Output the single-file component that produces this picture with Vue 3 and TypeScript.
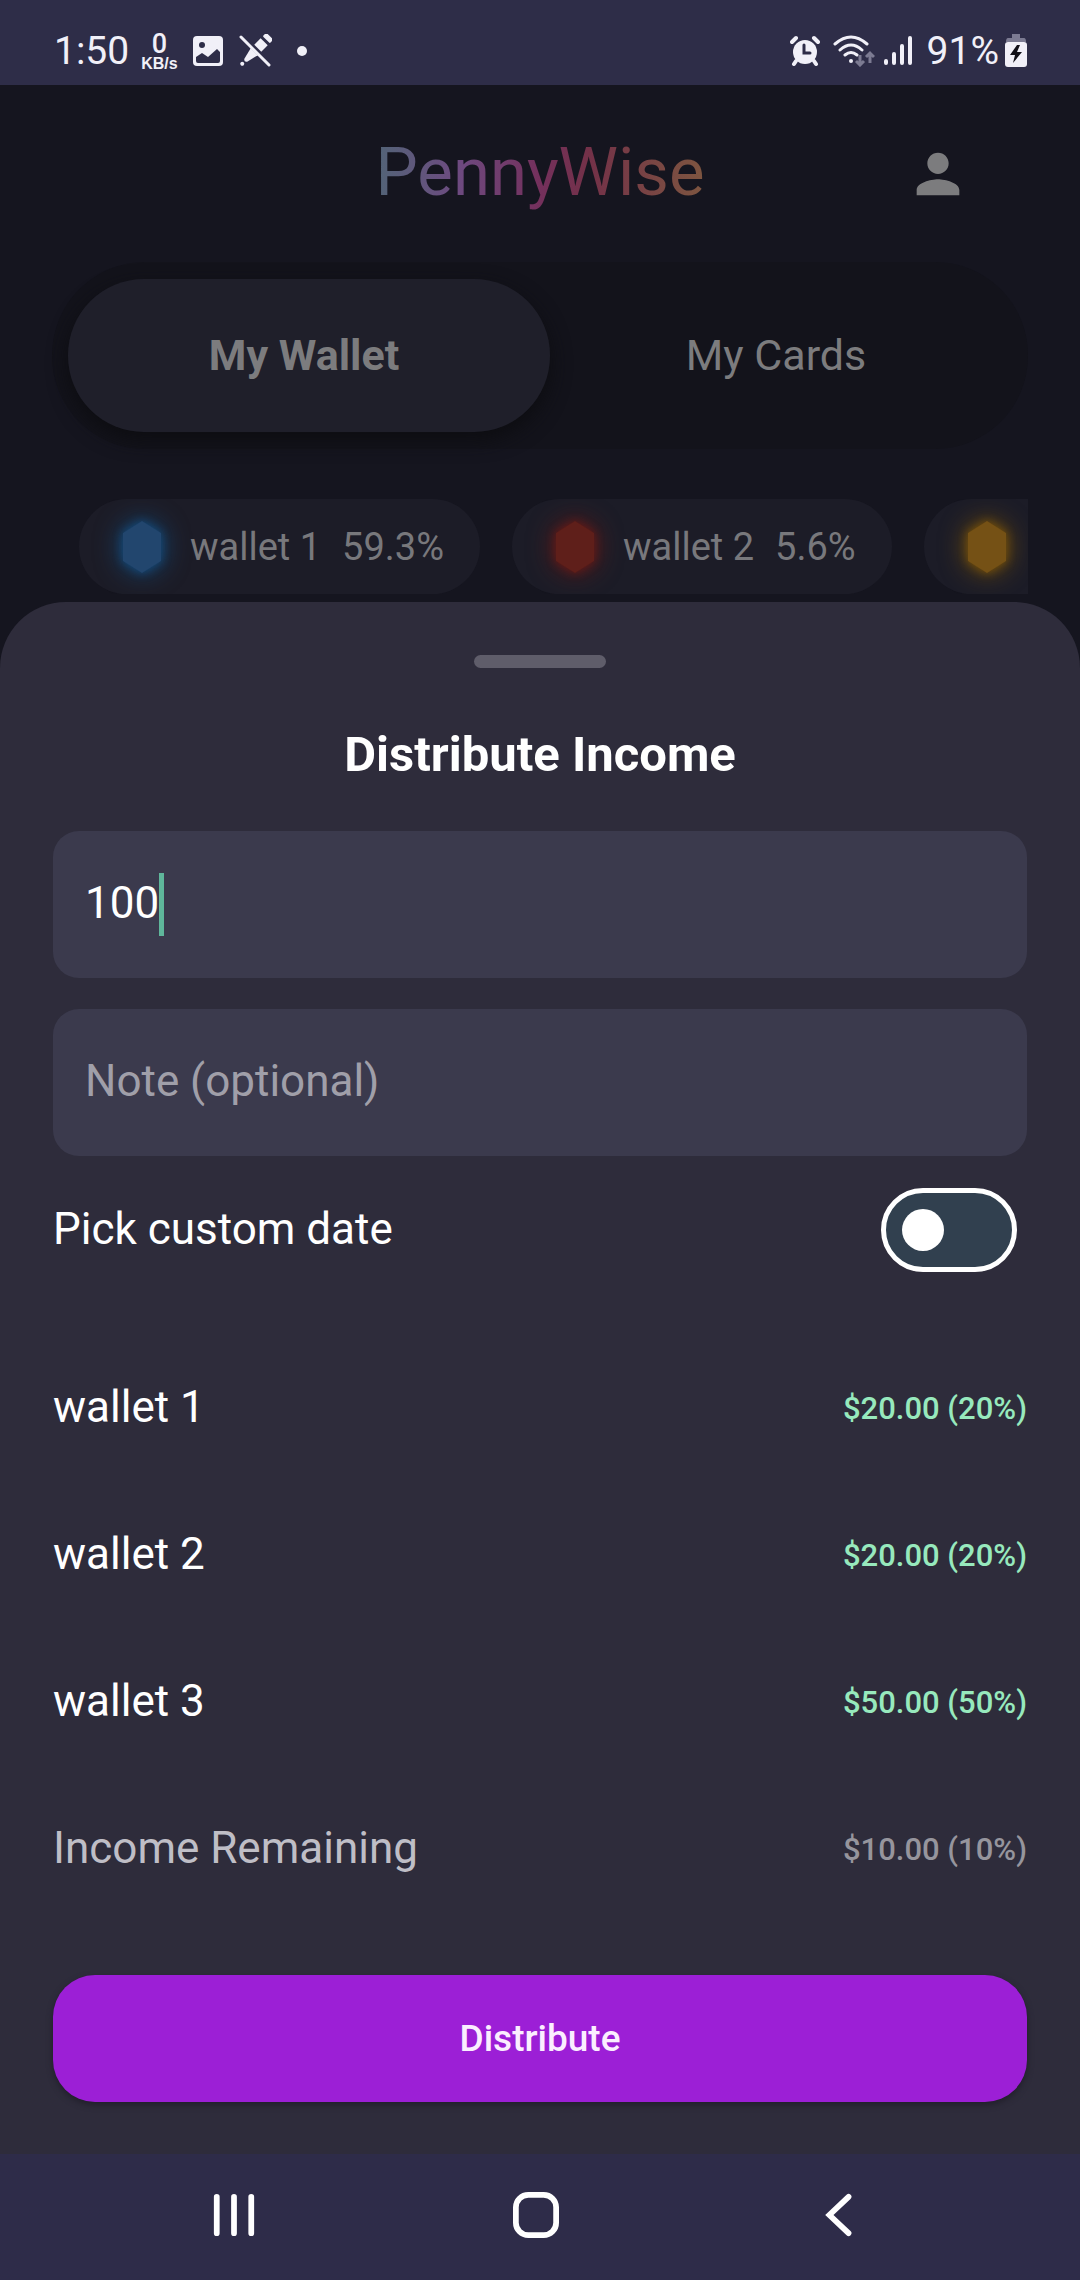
<script setup lang="ts">
import { ref } from 'vue'

interface Chip {
  label: string
  name?: string
  share?: string
  tone: 'blue' | 'red' | 'amber'
}

interface Split {
  name: string
  amount: string
  rest?: boolean
}

const chips: Chip[] = [
  { label: 'wallet 1', name: 'wallet 1', share: '59.3%', tone: 'blue' },
  { label: 'wallet 2', name: 'wallet 2', share: '5.6%', tone: 'red' },
  { label: 'wallet 3', tone: 'amber' },
]

const splits: Split[] = [
  { name: 'wallet 1', amount: '$20.00 (20%)' },
  { name: 'wallet 2', amount: '$20.00 (20%)' },
  { name: 'wallet 3', amount: '$50.00 (50%)' },
  { name: 'Income Remaining', amount: '$10.00 (10%)', rest: true },
]

const amount = ref('100')
const note = ref('')
const customDate = ref(false)
</script>

<template>
  <div class="screen">
    <div class="status">
      <div class="status-side">
        <span class="clock">1:50</span>
        <span class="rate"><b>0</b><small>KB/s</small></span>
        <svg class="picture" viewBox="0 0 30 30" aria-hidden="true">
          <rect width="30" height="30" rx="4" fill="#f1f0f8" />
          <circle cx="9" cy="9" r="3" fill="#2e2d48" />
          <path d="M3 21l6-4 6 4 9-8 3 3v9q0 2-2 2H5q-2 0-2-2z" fill="#2e2d48" />
        </svg>
        <svg class="pen" viewBox="0 0 34 34" fill="#f1f0f8" aria-hidden="true">
          <g transform="translate(29 5) rotate(45)">
            <rect x="-5" y="-4" width="10" height="5" rx="1" />
            <path d="M-5 4h10v14l-3 12q-2 3-4 0l-3-12z" />
            <circle cy="35" r="2" />
          </g>
          <path d="M4 2L32 30" fill="none" stroke="#2e2d48" stroke-width="5" />
          <path d="M3 3L31 31" fill="none" stroke="#f1f0f8" stroke-width="3" stroke-linecap="round" />
        </svg>
        <span class="dot"></span>
      </div>
      <div class="status-side">
        <svg class="alarm" viewBox="0 0 30 30" fill="none" stroke="#f1f0f8" stroke-linecap="round" aria-hidden="true">
          <circle cx="15" cy="16" r="12" fill="#f1f0f8" stroke="none" />
          <path d="M2 6l4-4M24 2l4 4M6 25l-2 3M24 25l2 3" stroke-width="4" />
          <path d="M14 9v8h6" stroke="#2e2d48" stroke-width="3" />
        </svg>
        <svg class="wifi" viewBox="0 0 42 32" fill="none" stroke="#f1f0f8" stroke-width="3" stroke-linecap="round" aria-hidden="true">
          <path d="M2 9Q18-5 34 9M7 15q11-10 22 0M12 20q6-5 12 0" />
          <circle cx="18" cy="26" r="2" fill="#f1f0f8" stroke="none" />
          <path d="M27 20v10m-4-4l4 4 4-4M37 28v-10m-4 4l4-4 4 4" stroke="#7c7b92" stroke-linecap="butt" />
        </svg>
        <svg class="signal" viewBox="0 0 28 30" fill="none" stroke="#f1f0f8" stroke-width="4" stroke-linecap="round" aria-hidden="true">
          <path d="M2 25v2M10 18v9M18 10v17M26 2v25" />
        </svg>
        <span class="clock">91%</span>
        <svg class="battery" viewBox="0 0 22 34" aria-hidden="true">
          <path d="M7 0h8v4h4q2 0 2 4H1q0-4 2-4h4z" fill="#7c7b92" />
          <rect y="8" width="22" height="25" rx="3" fill="#f1f0f8" />
          <path d="M12 11L5 21h5l-2 8 9-11h-5l3-7z" fill="#111018" />
        </svg>
      </div>
    </div>

    <header class="header">
      <h1 class="brand">PennyWise</h1>
      <button class="profile" type="button" aria-label="Profile">
        <svg viewBox="0 0 24 24" fill="#7c7c7e" aria-hidden="true">
          <path d="M12 12c2.21 0 4-1.79 4-4s-1.79-4-4-4-4 1.79-4 4 1.79 4 4 4zm0 2c-2.67 0-8 1.34-8 4v2h16v-2c0-2.66-5.33-4-8-4z" />
        </svg>
      </button>
    </header>

    <nav class="tabs">
      <button class="tab active" type="button">My Wallet</button>
      <button class="tab" type="button">My Cards</button>
    </nav>

    <div class="chips">
      <button v-for="chip in chips" :key="chip.label" class="chip" type="button" :aria-label="chip.label">
        <svg class="gem" :class="chip.tone" viewBox="0 0 38 52" aria-hidden="true">
          <path d="M19 0L38 12v28L19 52 0 40V12z" />
        </svg>
        <span v-if="chip.name">{{ chip.name }}</span>
        <span v-if="chip.share" class="share">{{ chip.share }}</span>
      </button>
    </div>

    <form class="sheet" @submit.prevent>
      <div class="handle"></div>
      <h2 class="title">Distribute Income</h2>
      <label class="field">
        <input
          v-model="amount"
          class="amount-input"
          type="text"
          inputmode="decimal"
          aria-label="Amount"
          :style="{ width: amount.length + 'ch' }"
        />
        <span class="caret"></span>
      </label>
      <label class="field">
        <input v-model="note" class="note-input" type="text" placeholder="Note (optional)" aria-label="Note" />
      </label>
      <label class="date-row">
        <span class="label">Pick custom date</span>
        <input v-model="customDate" class="switch" type="checkbox" role="switch" />
      </label>
      <dl class="splits">
        <div v-for="split in splits" :key="split.name" class="split" :class="{ rest: split.rest }">
          <dt class="label">{{ split.name }}</dt>
          <dd>{{ split.amount }}</dd>
        </div>
      </dl>
      <button class="submit" type="submit">Distribute</button>
    </form>

    <nav class="system">
      <button type="button" aria-label="Recents">
        <svg viewBox="0 0 48 48" fill="none" stroke="#fff" stroke-width="6" stroke-linecap="round" aria-hidden="true">
          <path d="M6 5v38M24 5v38M42 5v38" />
        </svg>
      </button>
      <button type="button" aria-label="Home">
        <svg viewBox="0 0 48 48" fill="none" stroke="#fff" stroke-width="6" aria-hidden="true">
          <rect x="3" y="3" width="42" height="42" rx="13" />
        </svg>
      </button>
      <button type="button" aria-label="Back">
        <svg viewBox="0 0 48 48" fill="none" stroke="#fff" stroke-width="6" stroke-linecap="round" aria-hidden="true">
          <path d="M35 5L15 24l20 19" />
        </svg>
      </button>
    </nav>
  </div>
</template>

<style>
body {
  margin: 0;
  background: #15151f;
}
</style>

<style scoped>
.screen {
  display: flex;
  flex-direction: column;
  min-height: 100vh;
  background: #15151f;
  color: #fff;
  font-family: Roboto, "Liberation Sans", sans-serif;
  font-size: 44px;
}

.screen * {
  box-sizing: border-box;
}

button,
input {
  border: 0;
  padding: 0;
  margin: 0;
  background: none;
  color: inherit;
  font: inherit;
  outline: none;
}

svg {
  display: block;
  flex: none;
}

.status {
  display: flex;
  justify-content: space-between;
  align-items: center;
  height: 85px;
  padding: 16px 53px 0 54px;
  background: #2e2d48;
  color: #f1f0f8;
}

.status-side {
  display: flex;
  align-items: center;
}

.clock {
  font-size: 39px;
  line-height: 40px;
}

.rate {
  display: flex;
  flex-direction: column;
  align-items: center;
  margin: 0 15px 0 12px;
  padding-top: 2px;
}

.rate b {
  font-size: 27px;
  font-weight: 500;
  line-height: 24px;
}

.rate small {
  font-family: "Liberation Sans", sans-serif;
  font-size: 16px;
  font-weight: 700;
  line-height: 16px;
}

.picture {
  width: 30px;
  height: 30px;
}

.pen {
  width: 34px;
  height: 34px;
  margin: 0 25px 0 15px;
}

.dot {
  width: 10px;
  height: 10px;
  border-radius: 5px;
  background: #f1f0f8;
}

.alarm {
  width: 30px;
  height: 32px;
}

.wifi {
  width: 42px;
  height: 32px;
  margin: 0 9px 0 13px;
}

.signal {
  width: 28px;
  height: 30px;
  margin-right: 15px;
}

.battery {
  width: 22px;
  height: 34px;
  margin-left: 6px;
}

.header {
  display: grid;
  grid-template-columns: 1fr auto 1fr;
  align-items: center;
  height: 177px;
  padding: 0 78px;
}

.brand {
  grid-column: 2;
  margin: 0;
  padding-bottom: 3px;
  font-size: 67px;
  font-weight: 400;
  line-height: 80px;
  color: transparent;
  background: linear-gradient(90deg, #526477, #6d4a80 25%, #74305c 50%, #733148 65%, #7d5540);
  background-clip: text;
}

.profile {
  display: grid;
  place-items: center;
  justify-self: end;
  width: 128px;
  height: 128px;
}

.profile svg {
  width: 64px;
  height: 64px;
}

.tabs {
  display: grid;
  grid-template-columns: 1fr 1fr;
  margin: 0 52px;
  padding: 17px 16px;
  border-radius: 93px;
  background: #13131b;
}

.tab {
  height: 153px;
  padding-bottom: 2px;
  border-radius: 76px;
  color: #7c7c7e;
  font-size: 43px;
}

.tab.active {
  margin-right: -10px;
  padding-right: 10px;
  background: #1f1f2a;
  box-shadow: 0 8px 20px #0d0d11;
  font-weight: 700;
}

.chips {
  display: flex;
  gap: 32px;
  margin: 50px 52px 8px;
  padding-left: 27px;
  overflow: hidden;
}

.chip {
  display: flex;
  flex: none;
  align-items: center;
  min-width: 240px;
  height: 95px;
  padding: 0 36px 0 44px;
  border-radius: 48px;
  background: #1c1c27;
  color: #78787c;
  font-size: 38px;
}

.share {
  margin-left: 21px;
}

.gem {
  width: 38px;
  height: 52px;
  margin-right: 29px;
}

.gem.blue {
  fill: #22466e;
  filter: drop-shadow(0 0 5px #144a7a) drop-shadow(0 0 12px #144a7a);
}

.gem.red {
  fill: #5f1f1a;
  filter: drop-shadow(0 0 5px #651a17) drop-shadow(0 0 12px #651a17);
}

.gem.amber {
  fill: #755115;
  filter: drop-shadow(0 0 5px #75500a) drop-shadow(0 0 12px #75500a);
}

.sheet {
  display: flex;
  flex: 1;
  flex-direction: column;
  padding: 53px 53px 52px;
  border-radius: 66px 66px 0 0;
  background: #2e2c3b;
}

.handle {
  align-self: center;
  width: 132px;
  height: 13px;
  border-radius: 7px;
  background: #5f5d6a;
}

.title {
  margin: 55px 0 44px;
  font-size: 49px;
  font-weight: 700;
  line-height: 64px;
  text-align: center;
}

.field {
  display: flex;
  align-items: center;
  height: 147px;
  padding: 0 32px;
  border-radius: 26px;
  background: #3b3a4d;
}

.field + .field {
  margin-top: 31px;
}

.field input {
  padding-bottom: 3px;
}

.amount-input {
  caret-color: transparent;
}

.note-input {
  flex: 1;
}

.note-input::placeholder {
  color: #a09fa9;
  opacity: 1;
}

.caret {
  width: 5px;
  height: 63px;
  background: #5fb69b;
}

.date-row {
  display: flex;
  align-items: center;
  justify-content: space-between;
  height: 148px;
  padding-right: 10px;
}

.label {
  padding-bottom: 3px;
}

.switch {
  display: flex;
  align-items: center;
  appearance: none;
  width: 136px;
  height: 84px;
  padding: 0 16px;
  border: 5px solid #fff;
  border-radius: 42px;
  background: #31404f;
}

.switch::before {
  content: "";
  width: 42px;
  height: 42px;
  border-radius: 21px;
  background: #fff;
}

.switch:checked {
  justify-content: flex-end;
}

.splits {
  margin: 31px 0 52px;
}

.split {
  display: flex;
  align-items: center;
  justify-content: space-between;
  height: 147px;
}

.split dd {
  margin: 0;
  color: #97e9bd;
  font-size: 31px;
  font-weight: 500;
}

.rest dt {
  color: #bfbec6;
}

.rest dd {
  color: #96959d;
}

.submit {
  height: 127px;
  border-radius: 42px;
  background: #9c1fd6;
  box-shadow: 0 3px 6px #211f2b;
  color: #fbeeff;
  font-size: 37px;
  font-weight: 500;
}

.system {
  display: flex;
  justify-content: center;
  gap: 174px;
  height: 126px;
  padding: 0 9px 4px 0;
  background: #2e2c49;
}

.system button {
  display: grid;
  place-items: center;
  width: 128px;
}

.system svg {
  width: 46px;
  height: 46px;
}
</style>
